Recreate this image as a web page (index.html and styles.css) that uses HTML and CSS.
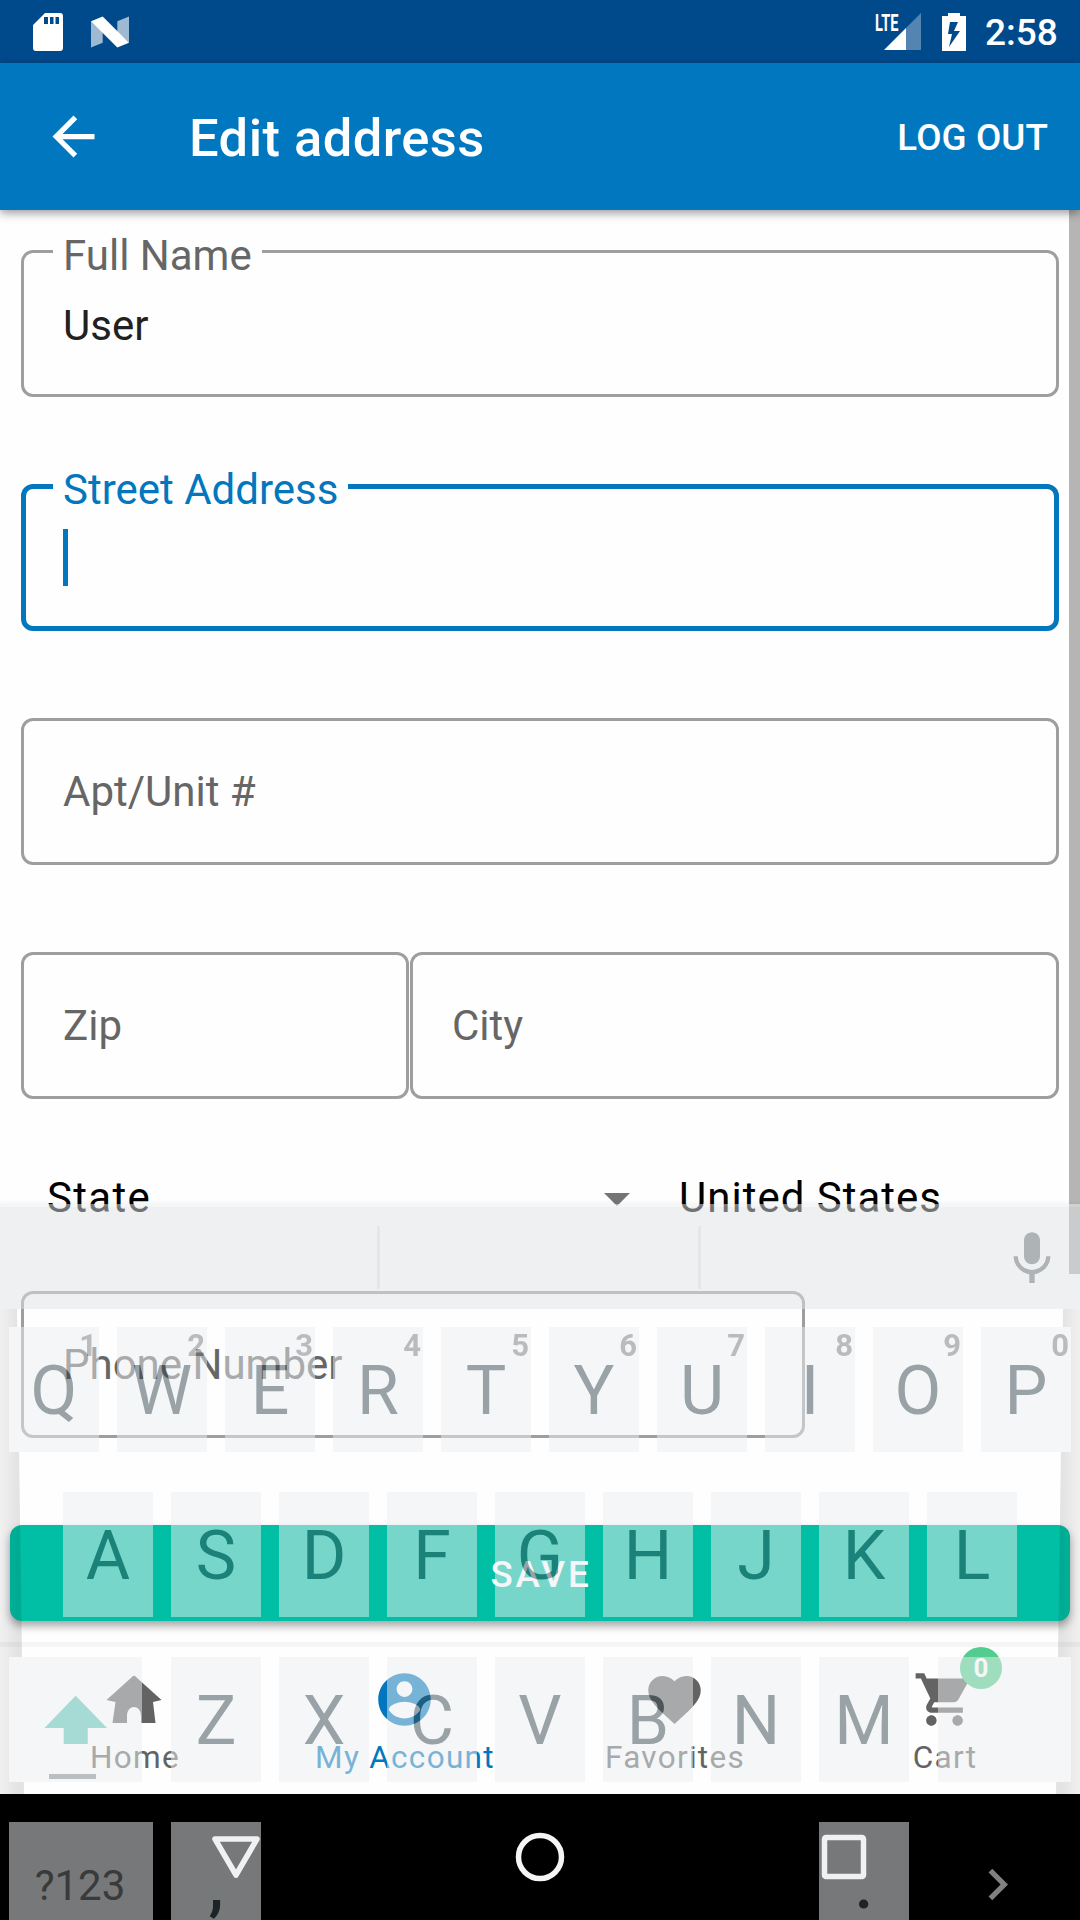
FILE: index.html
```html
<!DOCTYPE html>
<html lang="en">
<head>
<meta charset="utf-8">
<title>Edit address</title>
<link rel="stylesheet" href="styles.css">
</head>
<body>
<div class="phone">
  <header class="status">
    <svg class="sd" viewBox="0 0 30 38"><path fill="#fff" fill-rule="evenodd" d="M12 0H27Q30 0 30 3V35Q30 38 27 38H3Q0 38 0 35V12ZM11 4V11H15V4ZM17 4V11H20.500V4ZM22.500 4V11H26V4Z"/></svg>
    <svg class="nougat" viewBox="0 0 39 32"><path fill="#fff" fill-opacity=".62" d="M0 5L12 14V27L0 32ZM39 0V27L27 16V5Z"/><path fill="#fff" d="M0 5L12 0L39 27L27 32Z"/></svg>
    <span class="spacer"></span>
    <span class="signal"><span class="lte">LTE</span><svg viewBox="0 0 37 37"><path fill="#fff" fill-opacity=".33" d="M22 15L37 0V37H22Z"/><path fill="#fff" d="M0 37L22 15V37Z"/></svg></span>
    <svg class="battery" viewBox="0 0 24 38"><path fill="#fff" fill-rule="evenodd" d="M6 0H18V3H24V38H0V3H6ZM8 9L6 21H10L7 34L18 18H12L16 9Z"/></svg>
    <span class="clock">2:58</span>
  </header>
  <div class="toolbar">
    <svg class="back" viewBox="0 0 24 24"><path fill="#fff" d="M20 11H7.830l5.590-5.590L12 4l-8 8 8 8 1.410-1.410L7.830 13H20v-2z"/></svg>
    <h1>Edit address</h1>
    <span class="logout">LOG OUT</span>
  </div>
  <main class="form">
    <div class="field"><span class="label">Full Name</span><span class="value">User</span></div>
    <div class="field focused"><span class="label">Street Address</span><span class="caret"></span></div>
    <div class="field"><span class="hint">Apt/Unit #</span></div>
    <div class="pair">
      <div class="field zip"><span class="hint">Zip</span></div>
      <div class="field city"><span class="hint">City</span></div>
    </div>
    <div class="selects">
      <span class="state">State</span>
      <svg class="drop" viewBox="0 0 26 13"><path fill="#757575" d="M0 0H26L13 13Z"/></svg>
      <span>United States</span>
    </div>
    <div class="field phone-number"><span class="hint">Phone Number</span></div>
    <div class="save">SAVE</div>
    <div class="scrollbar"></div>
  </main>
  <nav class="tabs">
    <div class="tab"><svg viewBox="0 0 63 63"><path fill="#636363" d="M29 9Q31 6.500 33 9L58.500 32L50 34L52.500 55H38V48C38 36 24 36 24 48V55H9.500L12.500 34L3.500 32Z"/></svg><span>Home</span></div>
    <div class="tab active"><svg viewBox="0 0 24 24"><path fill="#0277bd" d="M12 2C6.480 2 2 6.480 2 12s4.480 10 10 10 10-4.480 10-10S17.520 2 12 2zm0 3c1.660 0 3 1.340 3 3s-1.340 3-3 3-3-1.340-3-3 1.340-3 3-3zm0 14.200c-2.500 0-4.710-1.280-6-3.220.030-1.990 4-3.080 6-3.080 1.990 0 5.970 1.090 6 3.080-1.290 1.940-3.500 3.220-6 3.220z"/></svg><span>My Account</span></div>
    <div class="tab"><svg viewBox="0 0 24 24"><path fill="#636363" d="M12 21.350l-1.450-1.320C5.400 15.360 2 12.280 2 8.500 2 5.420 4.420 3 7.500 3c1.740 0 3.410.81 4.500 2.090C13.090 3.810 14.760 3 16.500 3 19.580 3 22 5.420 22 8.500c0 3.780-3.400 6.860-8.550 11.540L12 21.350z"/></svg><span>Favorites</span></div>
    <div class="tab"><svg viewBox="0 0 24 24"><path fill="#636363" d="M7 18c-1.100 0-1.990.9-1.990 2S5.900 22 7 22s2-.9 2-2-.9-2-2-2zM1 2v2h2l3.600 7.590-1.350 2.450c-.16.28-.25.61-.25.96 0 1.100.9 2 2 2h12v-2H7.420c-.14 0-.25-.11-.25-.25l.03-.12.900-1.630h7.450c.75 0 1.410-.41 1.750-1.030l3.580-6.490c.08-.14.12-.31.12-.48 0-.55-.45-1-1-1H5.210l-.94-2H1zm16 16c-1.100 0-1.990.9-1.990 2s.89 2 1.990 2 2-.9 2-2-.9-2-2-2z"/></svg><span>Cart</span><b class="badge">0</b></div>
  </nav>
  <footer class="system">
    <svg viewBox="0 0 54 54"><path d="M6 9H48L27 45Z"/></svg>
    <svg viewBox="0 0 54 54"><circle cx="27" cy="27" r="21.500"/></svg>
    <svg viewBox="0 0 54 54"><rect x="7.500" y="7.500" width="39" height="39" rx="1.500"/></svg>
  </footer>

  <section class="keyboard">
    <div class="strip">
      <i></i><i></i>
      <svg class="mic" viewBox="0 0 24 24"><path fill="#5f696d" d="M12 14c1.660 0 3-1.340 3-3V5c0-1.660-1.340-3-3-3S9 3.340 9 5v6c0 1.660 1.340 3 3 3zM17.300 11c0 3-2.540 5.100-5.300 5.100S6.700 14 6.700 11H5.100c0 3.410 2.720 6.230 5.900 6.720V21h2v-3.280c3.180-.48 5.900-3.300 5.900-6.720h-1.600z"/></svg>
    </div>
    <div class="edge left"></div>
    <div class="edge right"></div>
    <div class="keys">
      <div class="row"><span class="key">Q<sup>1</sup></span><span class="key">W<sup>2</sup></span><span class="key">E<sup>3</sup></span><span class="key">R<sup>4</sup></span><span class="key">T<sup>5</sup></span><span class="key">Y<sup>6</sup></span><span class="key">U<sup>7</sup></span><span class="key">I<sup>8</sup></span><span class="key">O<sup>9</sup></span><span class="key">P<sup>0</sup></span></div>
      <div class="row"><span class="key">A</span><span class="key">S</span><span class="key">D</span><span class="key">F</span><span class="key">G</span><span class="key">H</span><span class="key">J</span><span class="key">K</span><span class="key">L</span></div>
      <div class="row wide"><span class="key shift"><svg viewBox="0 0 133 125"><path fill="#4db6ac" d="M66.700 38.700L98 71H78.700V87H54.700V71H35.500Z"/><path fill="#7b8084" d="M40 117H87V122H40Z"/></svg></span><span class="letters"><span class="key">Z</span><span class="key">X</span><span class="key">C</span><span class="key">V</span><span class="key">B</span><span class="key">N</span><span class="key">M</span></span><span class="key shift"></span></div>
      <div class="row bottom"><span class="key symbols">?123</span><span class="key mark">,</span><span class="space"></span><span class="key mark">.</span><svg class="next" viewBox="0 0 24 24"><path fill="#fff" d="M10 6L8.590 7.410 13.170 12l-4.580 4.590L10 18l6-6z"/></svg></div>
    </div>
  </section>
</div>
</body>
</html>
```
FILE: styles.css
```css
* { box-sizing: border-box; }
body { margin: 0; font-family: Roboto, sans-serif; }
svg { display: block; flex: none; }

.phone {
  position: relative;
  display: flex;
  flex-direction: column;
  width: 1080px;
  height: 1920px;
  overflow: hidden;
  background: #fefefe;
}

.status {
  display: flex;
  align-items: center;
  height: 63px;
  padding: 0 22px 0 33px;
  background: #004a8c;
  color: #fff;
}
.sd { width: 30px; height: 38px; }
.nougat { width: 38px; height: 32px; margin-left: 28px; }
.spacer { flex: 1; }
.signal { position: relative; padding-left: 9px; margin-right: 21px; }
.signal svg { width: 37px; height: 37px; }
.lte {
  position: absolute;
  left: 0;
  top: -2px;
  font-size: 23.500px;
  line-height: 24px;
  font-weight: 700;
  transform: scaleX(.62);
  transform-origin: left;
}
.battery { width: 24px; height: 38px; margin-right: 19px; }
.clock { width: 73px; font-size: 37px; line-height: 60px; font-weight: 500; padding-top: 2px; }

.toolbar {
  position: relative;
  z-index: 1;
  display: flex;
  align-items: center;
  height: 147px;
  padding: 0 32px 0 42px;
  background: #0077bf;
  color: #fff;
  box-shadow: 0 3px 9px rgba(0, 0, 0, .4);
}
.back { width: 63px; height: 63px; }
.toolbar h1 {
  flex: 1;
  margin: 3px 0 0 84px;
  font-size: 52.500px;
  font-weight: 500;
  line-height: 62px;
  letter-spacing: .450px;
}
.logout { margin-top: 2px; font-size: 36.750px; font-weight: 500; letter-spacing: .100px; }

.form {
  position: relative;
  display: flex;
  flex-direction: column;
  gap: 87px;
  height: 1432px;
  padding: 40px 21px 0;
}
.field {
  position: relative;
  display: flex;
  align-items: center;
  flex: none;
  height: 147px;
  padding-left: 39px;
  border: 3px solid #9e9e9e;
  border-radius: 12px;
  font-size: 42px;
  color: #666;
}
.label {
  position: absolute;
  left: 29px;
  top: -22px;
  padding: 0 10px;
  line-height: 50px;
  background: #fefefe;
}
.value { padding-top: 4px; color: #212121; }
.focused { border: 5px solid #0277bd; padding-left: 37px; color: #0277bd; }
.focused .label { left: 27px; top: -24px; }
.caret { width: 5px; height: 57px; background: #0277bd; }
.pair { display: flex; gap: 1px; }
.zip { width: 388px; }
.city { flex: 1; }
.selects {
  display: flex;
  height: 18px;
  padding-left: 26px;
  font-size: 42px;
  line-height: 24px;
  letter-spacing: 1px;
  color: #000;
}
.state { width: 557px; letter-spacing: 1.300px; }
.drop { width: 26px; height: 13px; margin: 7px 49px 0 0; }
.phone-number { width: 784px; }
.save {
  flex: none;
  height: 96px;
  margin: 0 -11px;
  border-radius: 12px;
  background: #00bfa5;
  box-shadow: 0 5px 8px rgba(0, 0, 0, .35);
  color: #fff;
  font-size: 36.750px;
  font-weight: 500;
  line-height: 99px;
  letter-spacing: 2.900px;
  text-indent: 2px;
  text-align: center;
}
.scrollbar {
  position: absolute;
  right: 0;
  top: 0;
  width: 11px;
  height: 1064px;
  background: #b5b5b5;
}

.tabs {
  display: flex;
  height: 152px;
  border-top: 5px solid #f5f5f5;
}
.tab {
  position: relative;
  flex: 1;
  display: flex;
  flex-direction: column;
  align-items: center;
  padding-top: 21px;
  font-size: 31.500px;
  line-height: 40px;
  letter-spacing: 1.300px;
  color: #636363;
}
.tab svg { width: 63px; height: 63px; margin-right: 2px; }
.tab span { margin-top: 7px; }
.active { color: #0277bd; }
.badge {
  position: absolute;
  left: 150px;
  top: 0;
  width: 42px;
  height: 42px;
  border-radius: 50%;
  background: #52cc8f;
  color: #fff;
  font-size: 26px;
  line-height: 43px;
  letter-spacing: 0;
  text-align: center;
}

.system {
  display: flex;
  gap: 250px;
  height: 126px;
  padding: 36px 0 0 209px;
  background: #000;
}
.system svg {
  width: 54px;
  height: 54px;
  fill: none;
  stroke: #f5f5f5;
  stroke-width: 5.500;
  stroke-linejoin: round;
}

.keyboard {
  position: absolute;
  left: 0;
  top: 1204px;
  width: 1080px;
  height: 716px;
  opacity: .506;
}
.strip {
  display: flex;
  align-items: center;
  height: 105px;
  border-top: 3px solid #eceded;
  background: #dee1e5;
  box-shadow: 0 -2px 3px rgba(0, 0, 0, .07);
}
.strip i { width: 3px; height: 63px; margin-left: 377px; margin-bottom: 2px; background: #cbcdd0; }
.strip i + i { margin-left: 318px; }
.mic { width: 64px; height: 64px; margin: 1px 0 0 299px; }
.edge { position: absolute; top: 105px; width: 24px; height: 485px; }
.left {
  left: 0;
  background: linear-gradient(90deg, rgba(0, 0, 0, .11), rgba(0, 0, 0, .21) 18px);
  clip-path: polygon(0 0, 17px 0, 24px 100%, 0 100%);
}
.right {
  right: 0;
  background: linear-gradient(270deg, rgba(0, 0, 0, .11), rgba(0, 0, 0, .21) 18px);
  clip-path: polygon(7px 0, 100% 0, 100% 100%, 0 100%);
}
.keys {
  position: relative;
  display: flex;
  flex-direction: column;
  gap: 40px;
  height: 611px;
  padding: 18px 9px 0;
  overflow: hidden;
}
.row { display: flex; flex: none; justify-content: center; gap: 18px; height: 125px; }
.key {
  position: relative;
  flex: none;
  width: 90px;
  height: 125px;
  background: #ebedf0;
  color: #37474f;
  font-size: 68px;
  line-height: 128px;
  text-align: center;
}
.key sup {
  position: absolute;
  right: 2px;
  top: 0;
  font-size: 31px;
  line-height: 37px;
  font-weight: 700;
  color: #777a7e;
}
.wide { justify-content: space-between; gap: 0; }
.letters { display: flex; gap: 18px; }
.key.shift { width: 133px; }
.bottom { justify-content: flex-start; }
.key.symbols { width: 144px; padding-right: 2px; font-size: 42px; color: #6f7376; }
.key.mark { line-height: 126px; font-weight: 500; }
.space { width: 522px; }
.next { width: 63px; height: 63px; margin: 31px 0 0 39px; }
```
